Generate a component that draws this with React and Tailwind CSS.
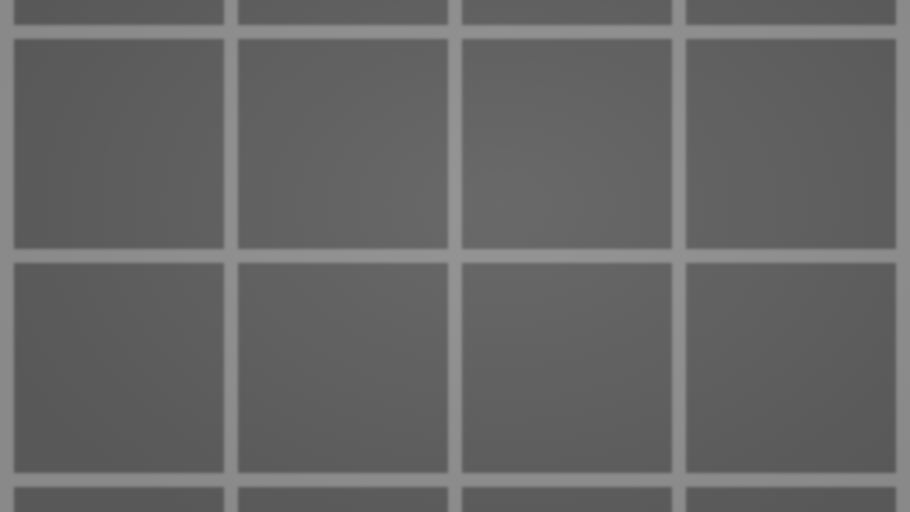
export default function App() {
  const tiles = Array.from({ length: 16 });
  return (
    <div className="relative w-[910px] h-[512px] overflow-hidden bg-[#898989]">
      <div className="grid grid-cols-[repeat(4,210px)] auto-rows-[210px] gap-[14px] pl-[14px] mt-[-185px] blur-[1.5px]">
        {tiles.map((_, i) => (
          <div key={i} className="bg-[#585858]" />
        ))}
      </div>
      <div className="pointer-events-none absolute inset-0 bg-[radial-gradient(ellipse_60%_75%_at_55%_40%,rgba(255,255,255,0.1),rgba(255,255,255,0)_100%)]" />
    </div>
  );
}
